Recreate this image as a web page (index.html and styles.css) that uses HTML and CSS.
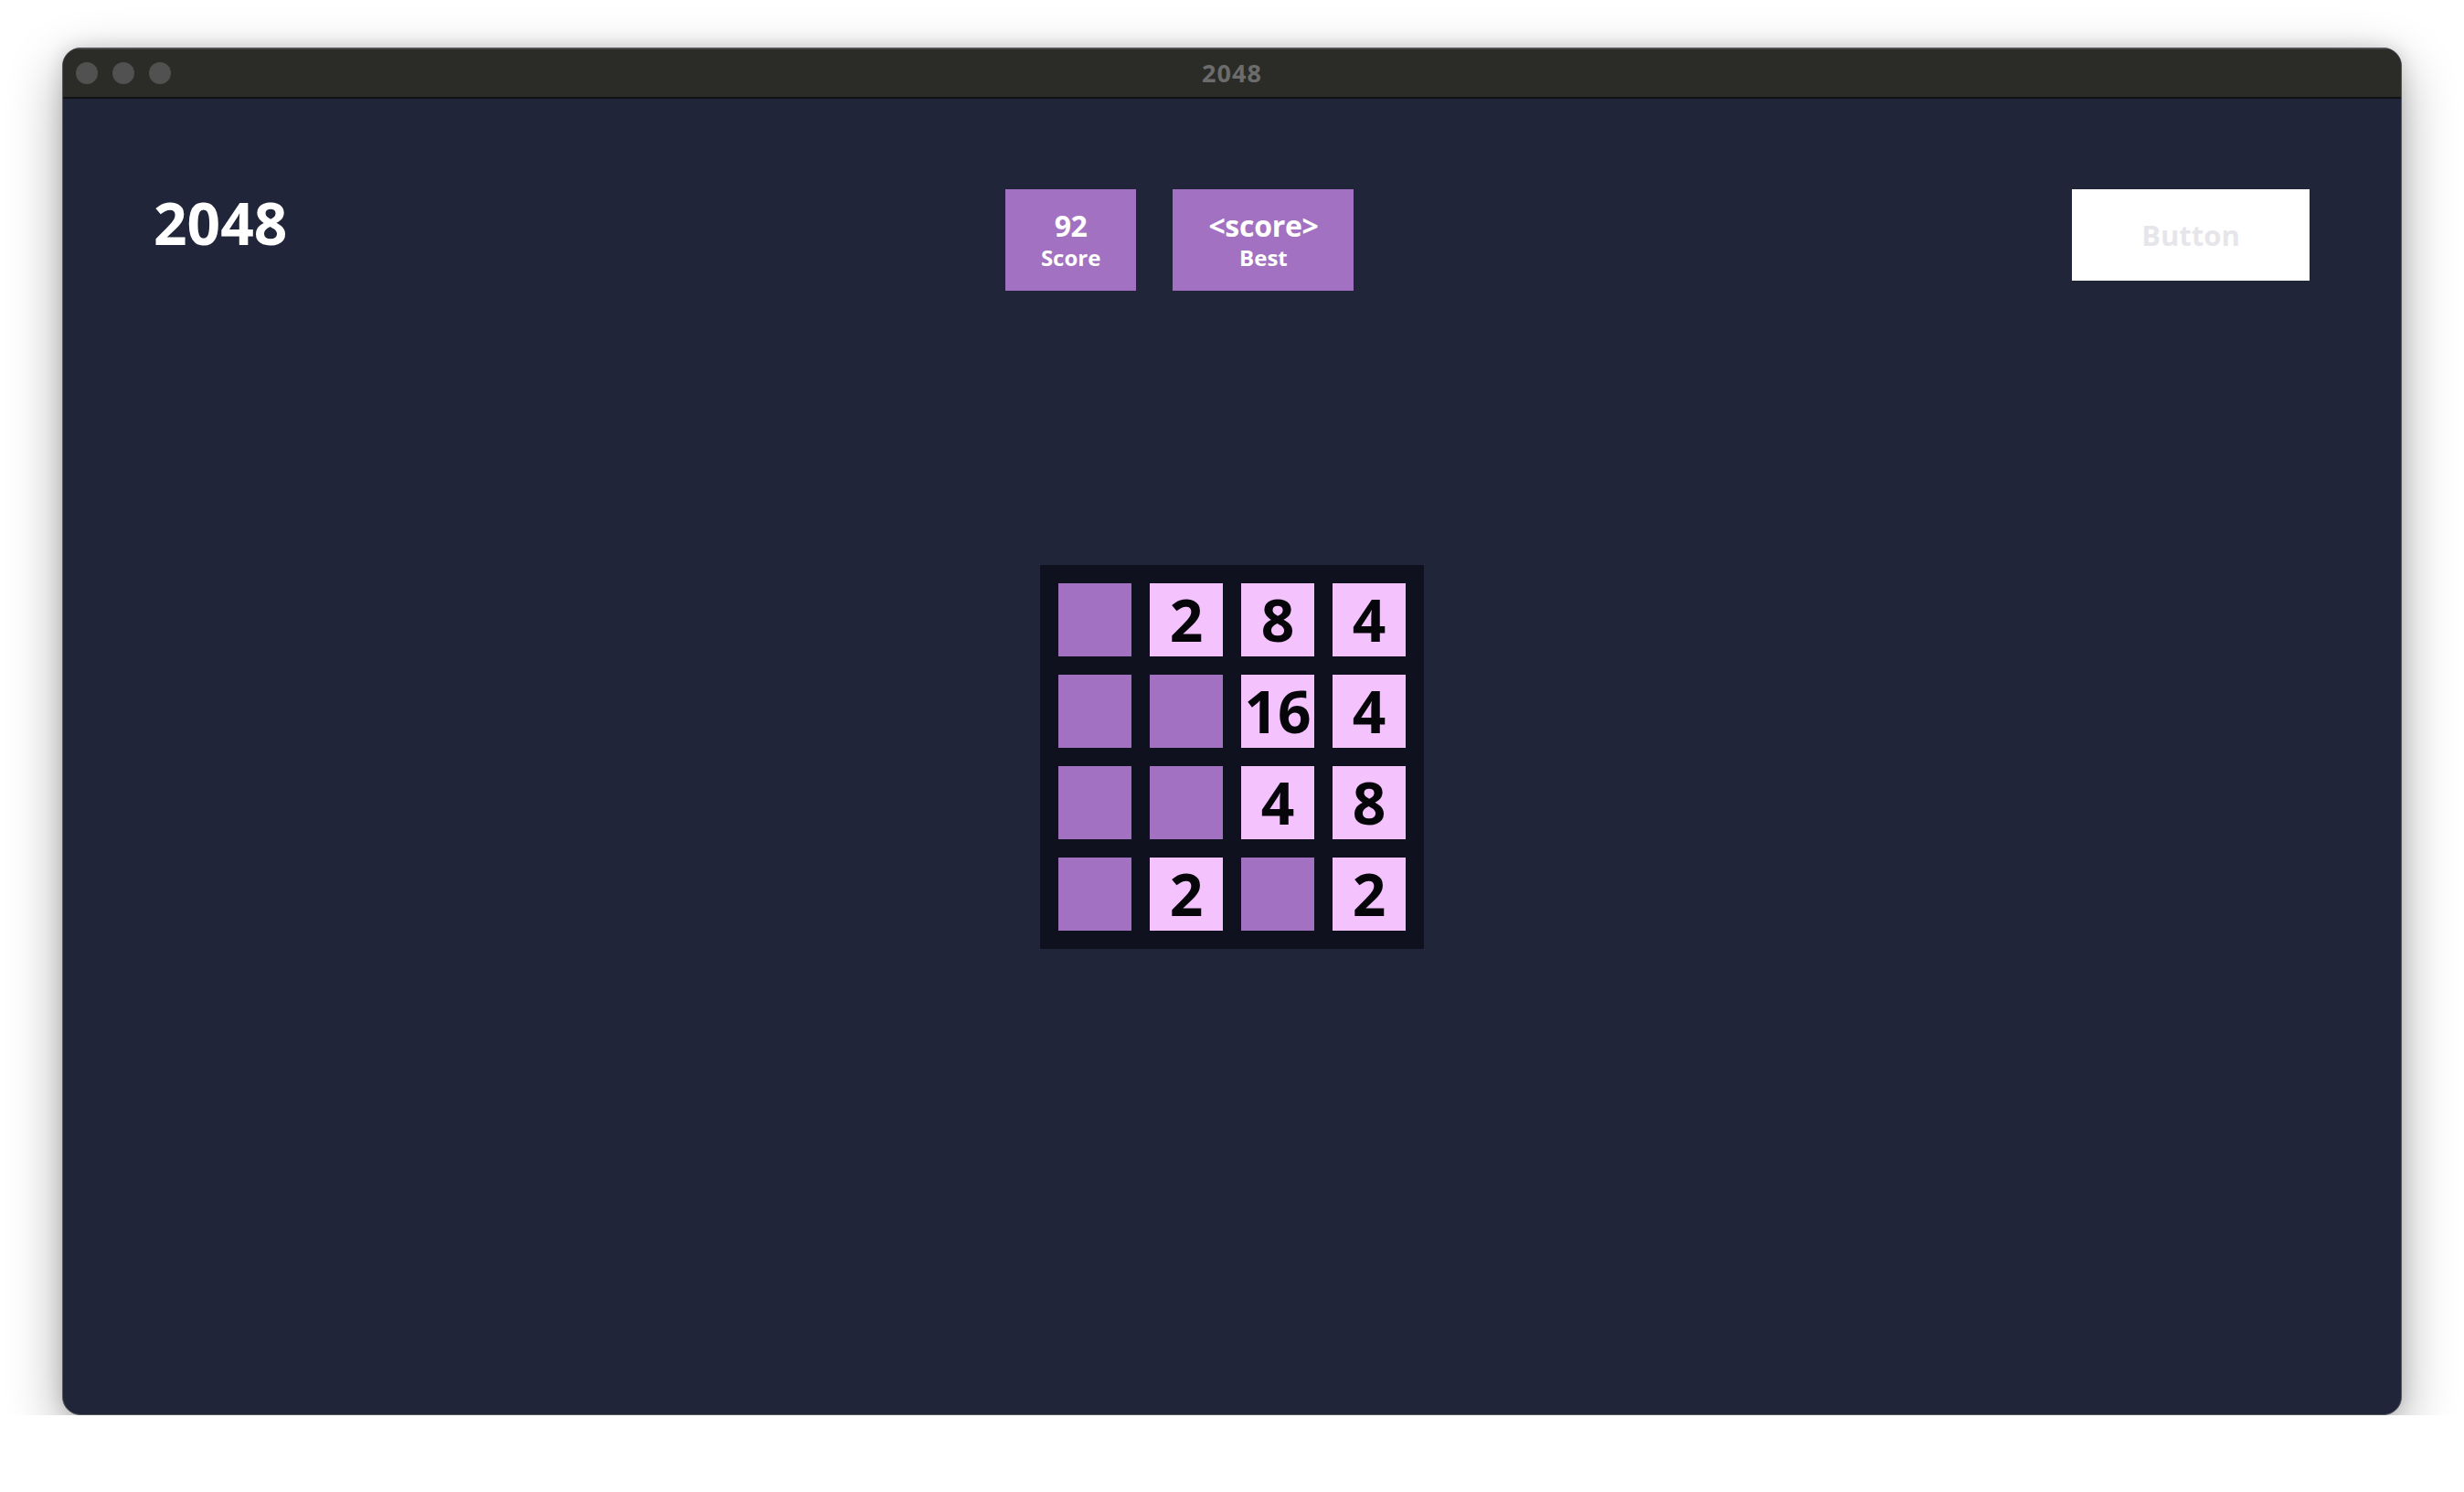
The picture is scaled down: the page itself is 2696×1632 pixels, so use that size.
FILE: index.html
```html
<!DOCTYPE html>
<html lang="en">
<head>
<meta charset="utf-8">
<title>2048</title>
<link rel="stylesheet" href="styles.css">
</head>
<body>
<div class="window">
  <div class="titlebar">
    <div class="lights">
      <span class="light"></span>
      <span class="light"></span>
      <span class="light"></span>
    </div>
    <div class="wintitle">2048</div>
  </div>
  <div class="content">
    <header class="header">
      <h1 class="logo">2048</h1>
      <div class="scores">
        <div class="scorebox">
          <div class="score-value">92</div>
          <div class="score-label">Score</div>
        </div>
        <div class="scorebox">
          <div class="score-value">&lt;score&gt;</div>
          <div class="score-label">Best</div>
        </div>
      </div>
      <button class="btn">Button</button>
    </header>
    <main class="board">
      <div class="tile empty"></div>
      <div class="tile">2</div>
      <div class="tile">8</div>
      <div class="tile">4</div>
      <div class="tile empty"></div>
      <div class="tile empty"></div>
      <div class="tile">16</div>
      <div class="tile">4</div>
      <div class="tile empty"></div>
      <div class="tile empty"></div>
      <div class="tile">4</div>
      <div class="tile">8</div>
      <div class="tile empty"></div>
      <div class="tile">2</div>
      <div class="tile empty"></div>
      <div class="tile">2</div>
    </main>
  </div>
</div>
</body>
</html>
```

FILE: styles.css
```css
html, body {
  margin: 0;
  padding: 0;
  background: #ffffff;
}

body {
  padding: 52px 68px 0 68px;
  font-family: "Open Sans", "Noto Sans", "Liberation Sans", sans-serif;
}

.window {
  width: 2560px;
  height: 1496px;
  box-sizing: border-box;
  border: 1px solid #55565c;
  border-radius: 20px;
  overflow: hidden;
  display: flex;
  flex-direction: column;
  background: #20253a;
  box-shadow: 0 20px 60px rgba(0, 0, 0, 0.33), 0 0 20px rgba(0, 0, 0, 0.14);
}

.titlebar {
  height: 55px;
  flex: none;
  background: #2b2b28;
  border-bottom: 2px solid #111214;
  box-sizing: border-box;
  display: grid;
  grid-template-columns: 1fr auto 1fr;
  align-items: center;
  box-shadow: inset 0 1px 0 #4a4a48;
}

.lights {
  display: flex;
  gap: 16px;
  padding-left: 14px;
}

.light {
  width: 24px;
  height: 24px;
  border-radius: 50%;
  background: #515151;
}

.wintitle {
  color: #6c6c6c;
  font-weight: 700;
  font-size: 27px;
  letter-spacing: 1px;
}

.content {
  flex: 1;
  display: grid;
  grid-template: 1fr / 1fr;
}

.header {
  grid-area: 1 / 1;
  align-self: start;
  display: flex;
  justify-content: space-between;
  align-items: flex-start;
  padding: 99px 100px 0 99px;
}

.logo {
  margin: 0;
  color: #ffffff;
  font-size: 64px;
  font-weight: 700;
  line-height: 74px;
}

.scores {
  display: flex;
  gap: 40px;
}

.scorebox {
  background: #a371c1;
  color: #ffffff;
  padding: 20px 39px;
  text-align: center;
  font-weight: 700;
}

.score-value {
  font-size: 32px;
  line-height: 39px;
  letter-spacing: -0.3px;
}

.score-label {
  font-size: 24px;
  line-height: 32px;
}

.btn {
  width: 260px;
  height: 100px;
  border: none;
  background: #ffffff;
  color: #e6e6ea;
  font-family: "Open Sans", "Noto Sans", sans-serif;
  font-weight: 700;
  font-size: 31px;
  padding: 0;
}

.board {
  grid-area: 1 / 1;
  place-self: center;
  display: grid;
  grid-template-columns: repeat(4, 80px);
  grid-auto-rows: 80px;
  gap: 20px;
  padding: 20px;
  background: #0f111e;
}

.tile {
  background: #f4c2fc;
  color: #05050a;
  font-size: 64px;
  font-weight: 700;
  display: flex;
  align-items: center;
  justify-content: center;
  line-height: 1;
}

.tile.empty {
  background: #a371c1;
}
```
